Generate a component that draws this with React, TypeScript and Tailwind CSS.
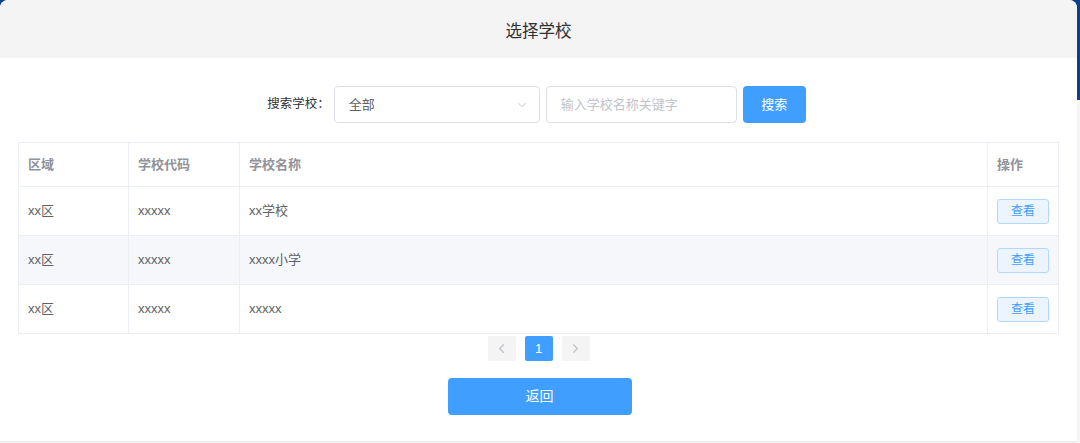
import { ChevronDown, ChevronLeft, ChevronRight } from "lucide-react";

const rows = [
  { area: "xx区", code: "xxxxx", name: "xx学校" },
  { area: "xx区", code: "xxxxx", name: "xxxx小学" },
  { area: "xx区", code: "xxxxx", name: "xxxxx" },
];

export default function App() {
  return (
    <div
      className="w-[1080px] h-[443px] overflow-hidden bg-[linear-gradient(to_bottom,#0d3f8f_100px,#f5f5f5_100px)] text-[#606266]"
      style={{ fontFamily: '"Liberation Sans", "Noto Sans CJK SC", sans-serif' }}
    >
      <div className="w-[1077px] h-[441px] bg-white rounded-t-lg overflow-hidden flex flex-col">
        {/* header */}
        <div className="h-[58px] bg-[#f4f4f4] flex items-center justify-center pt-1">
          <h3 className="text-[16.5px] text-[#303133]">选择学校</h3>
        </div>

        {/* search row */}
        <div className="flex items-center justify-center gap-[6px] mt-[28px] pr-[4px]">
          <span className="text-[12.5px] text-[#303133] mr-[-2px]">搜索学校：</span>
          <div className="w-[206px] h-[37px] border border-[#dcdfe6] rounded flex items-center justify-between pl-[14px] pr-[10px] text-[13px] text-[#606266]">
            <span>全部</span>
            <ChevronDown size={14} strokeWidth={1.5} className="text-[#c0c4cc]" />
          </div>
          <div className="w-[191px] h-[37px] border border-[#dcdfe6] rounded flex items-center px-[14px] text-[13px] text-[#c0c4cc]">
            输入学校名称关键字
          </div>
          <button className="w-[63px] h-[37px] bg-[#409eff] rounded text-white text-[13px]">搜索</button>
        </div>

        {/* table */}
        <div className="mx-[18px] mt-[19px] border border-[#ebeef5] text-[13px]">
          <div className="flex h-[43px] text-[#909399] font-semibold">
            <div className="w-[110px] border-r border-[#ebeef5] flex items-center px-[9px]">区域</div>
            <div className="w-[111px] border-r border-[#ebeef5] flex items-center px-[9px]">学校代码</div>
            <div className="flex-1 border-r border-[#ebeef5] flex items-center px-[9px]">学校名称</div>
            <div className="w-[70px] flex items-center px-[9px]">操作</div>
          </div>
          {rows.map((r, i) => (
            <div
              key={i}
              className={`flex h-[49px] border-t border-[#ebeef5] ${i === 1 ? "bg-[#f5f7fa]" : ""}`}
            >
              <div className="w-[110px] border-r border-[#ebeef5] flex items-center px-[9px]">{r.area}</div>
              <div className="w-[111px] border-r border-[#ebeef5] flex items-center px-[9px]">{r.code}</div>
              <div className="flex-1 border-r border-[#ebeef5] flex items-center px-[9px]">{r.name}</div>
              <div className="w-[70px] flex items-center px-[9px]">
                <button className="w-[52px] h-[25px] bg-[#ecf5ff] border border-[#b3d8ff] rounded-[3px] text-[#409eff] text-[12px]">
                  查看
                </button>
              </div>
            </div>
          ))}
        </div>

        {/* pagination */}
        <div className="flex justify-center gap-[9px] mt-[2px] text-[13px]">
          <div className="w-[28px] h-[25px] bg-[#f4f4f5] rounded-[2px] flex items-center justify-center text-[#c0c4cc]">
            <ChevronLeft size={15} strokeWidth={2} />
          </div>
          <div className="w-[28px] h-[25px] bg-[#409eff] rounded-[2px] flex items-center justify-center text-white">
            1
          </div>
          <div className="w-[28px] h-[25px] bg-[#f4f4f5] rounded-[2px] flex items-center justify-center text-[#c0c4cc]">
            <ChevronRight size={15} strokeWidth={2} />
          </div>
        </div>

        {/* footer */}
        <div className="flex justify-center mt-[17px] pl-[2px]">
          <button className="w-[184px] h-[37px] bg-[#409eff] rounded text-white text-[14px]">返回</button>
        </div>
      </div>
      <div className="w-[1077px] h-px bg-[#ebebeb]" />
    </div>
  );
}
